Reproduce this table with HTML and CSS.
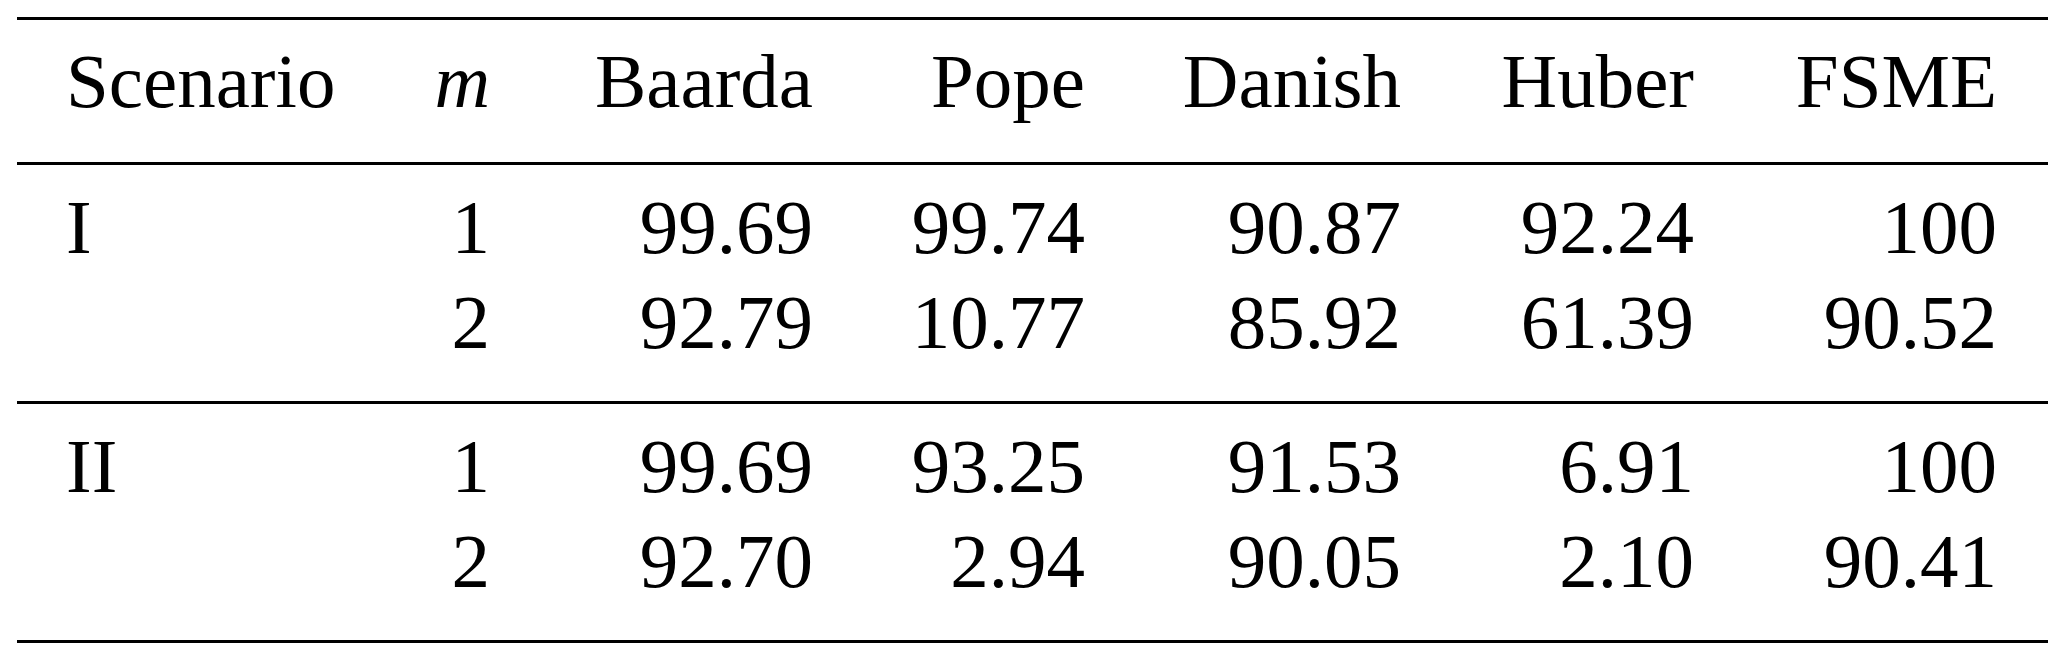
FILE: index.html
```html
<!DOCTYPE html>
<html lang="en">
<head>
    <meta charset="UTF-8">
    <meta name="viewport" content="width=device-width, initial-scale=1.0">
    <title>Scenario results</title>
    <link rel="stylesheet" href="styles.css">
</head>
<body>
    <table class="results">
        <colgroup>
            <col class="col-scenario">
            <col class="col-m">
            <col class="col-baarda">
            <col class="col-pope">
            <col class="col-danish">
            <col class="col-huber">
            <col class="col-fsme">
        </colgroup>
        <thead>
            <tr>
                <th class="label">Scenario</th>
                <th><i>m</i></th>
                <th>Baarda</th>
                <th>Pope</th>
                <th>Danish</th>
                <th>Huber</th>
                <th>FSME</th>
            </tr>
        </thead>
        <tbody>
            <tr>
                <td class="label">I</td>
                <td>1</td>
                <td>99.69</td>
                <td>99.74</td>
                <td>90.87</td>
                <td>92.24</td>
                <td>100</td>
            </tr>
            <tr>
                <td class="label"></td>
                <td>2</td>
                <td>92.79</td>
                <td>10.77</td>
                <td>85.92</td>
                <td>61.39</td>
                <td>90.52</td>
            </tr>
        </tbody>
        <tbody>
            <tr>
                <td class="label">II</td>
                <td>1</td>
                <td>99.69</td>
                <td>93.25</td>
                <td>91.53</td>
                <td>6.91</td>
                <td>100</td>
            </tr>
            <tr>
                <td class="label"></td>
                <td>2</td>
                <td>92.70</td>
                <td>2.94</td>
                <td>90.05</td>
                <td>2.10</td>
                <td>90.41</td>
            </tr>
        </tbody>
    </table>
</body>
</html>
```

FILE: styles.css
```css
* {
    margin: 0;
    padding: 0;
    box-sizing: border-box;
}

body {
    background: #fff;
    color: #000;
    font-family: 'Liberation Serif', 'Times New Roman', serif;
    padding: 17px 0 0 17px;
}

.results {
    width: 2031px;
    table-layout: fixed;
    border-collapse: collapse;
    font-size: 77px;
    line-height: 95px;
    border-bottom: 3px solid #000;
}

.col-scenario { width: 363px; }
.col-m { width: 110px; }
.col-baarda { width: 323px; }
.col-pope { width: 272px; }
.col-danish { width: 316px; }
.col-huber { width: 293px; }
.col-fsme { width: 354px; }

.results thead,
.results tbody {
    border-top: 3px solid #000;
}

.results th,
.results td {
    font-weight: normal;
    text-align: right;
    white-space: nowrap;
    vertical-align: baseline;
}

.results th {
    padding-top: 14px;
    padding-bottom: 33px;
}

.results th:last-child,
.results td:last-child {
    padding-right: 51px;
}

.results .label {
    text-align: left;
    padding-left: 49px;
}

.results tbody tr:first-child td {
    padding-top: 15px;
}

.results tbody tr:last-child td {
    padding-bottom: 31px;
}
```
